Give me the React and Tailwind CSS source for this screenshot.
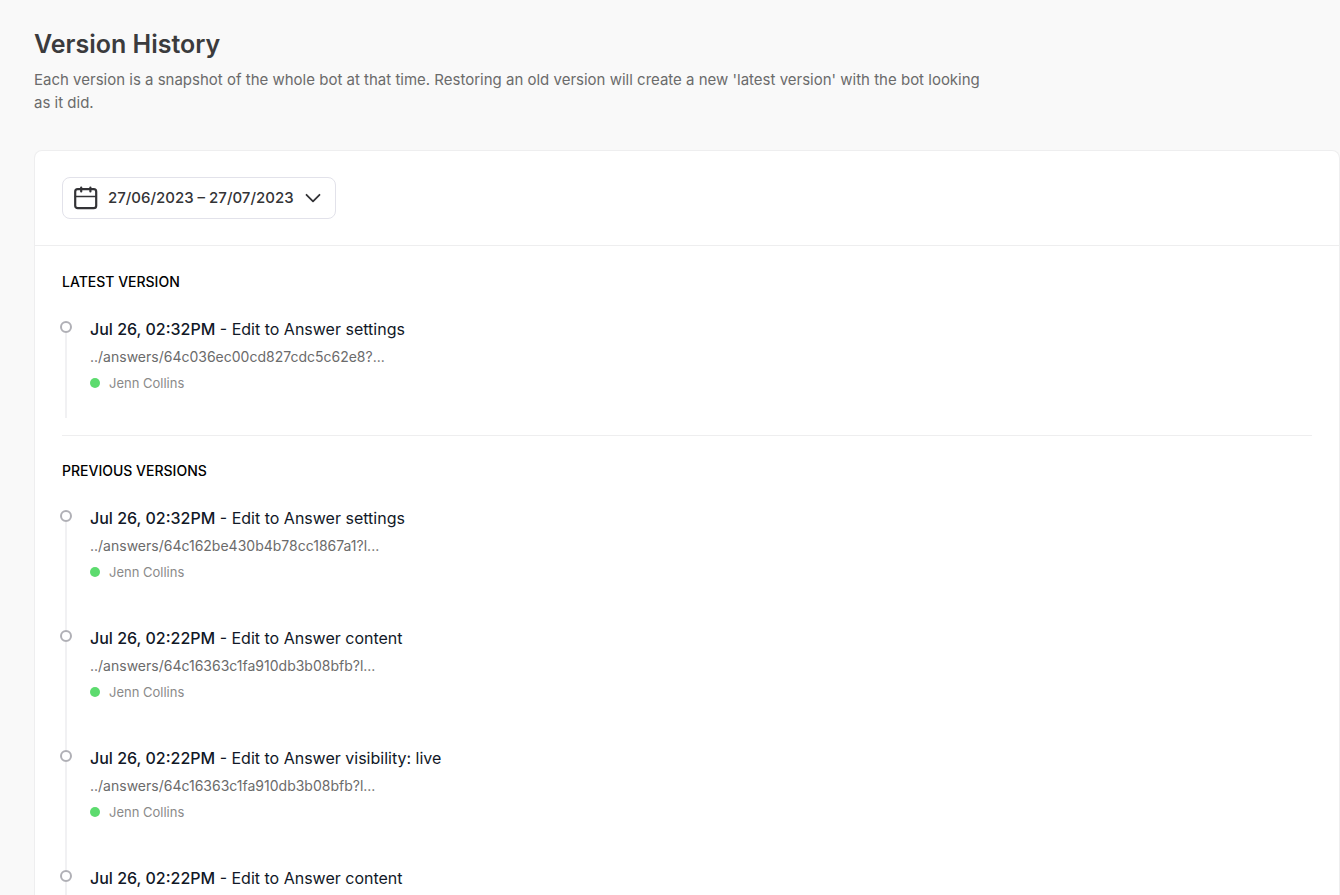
import React from 'react';

const latest = [
  { date: 'Jul 26, 02:32PM', action: 'Edit to Answer settings', path: '../answers/64c036ec00cd827cdc5c62e8?...', author: 'Jenn Collins' },
];

const previous = [
  { date: 'Jul 26, 02:32PM', action: 'Edit to Answer settings', path: '../answers/64c162be430b4b78cc1867a1?l...', author: 'Jenn Collins' },
  { date: 'Jul 26, 02:22PM', action: 'Edit to Answer content', path: '../answers/64c16363c1fa910db3b08bfb?l...', author: 'Jenn Collins' },
  { date: 'Jul 26, 02:22PM', action: 'Edit to Answer visibility: live', path: '../answers/64c16363c1fa910db3b08bfb?l...', author: 'Jenn Collins' },
  { date: 'Jul 26, 02:22PM', action: 'Edit to Answer content' },
];

function CalendarIcon() {
  return (
    <svg width="24" height="24" viewBox="0 0 24 24" fill="none" stroke="currentColor" strokeWidth="2.2" strokeLinecap="round" aria-hidden="true">
      <rect x="1.2" y="3.2" width="21" height="19" rx="2.5" />
      <path d="M1.5 10.5h20.5" strokeWidth="1.6" />
      <path d="M7.2 1.6v3.8M16.4 1.6v3.8" />
    </svg>
  );
}

function ChevronIcon() {
  return (
    <svg width="16" height="10" viewBox="0 0 16 10" fill="none" stroke="currentColor" strokeWidth="1.8" strokeLinecap="round" strokeLinejoin="round" aria-hidden="true">
      <path d="M1.5 1.8 8 8.3l6.5-6.5" />
    </svg>
  );
}

function Version({ item, single }) {
  return (
    <li className={`group flex gap-[18px] ${single ? 'h-[102px]' : 'h-[120px]'}`}>
      {/* Timeline marker */}
      <div className="flex w-3 shrink-0 flex-col items-center">
        <div className="h-[5px] w-[2px] bg-[#f1f1f3] group-first:bg-transparent" />
        <div className="h-3 w-3 shrink-0 rounded-full border-2 border-[#b0b0b6] bg-white" />
        <div className="w-[2px] flex-1 bg-[#f1f1f3]" />
      </div>
      <div className="min-w-0">
        <p className="text-base leading-[26px] text-[#111827]">
          <span className="font-medium">{item.date}</span> - {item.action}
        </p>
        {item.path && (
          <a href="#" className="mt-[5px] block text-sm leading-5 text-[#6b6b6b]">{item.path}</a>
        )}
        {item.author && (
          <div className="mt-[6px] flex items-center gap-[9px] text-[13px] leading-5 text-[#8a8a8a]">
            <span className="h-[10px] w-[10px] rounded-full bg-[#5cdb6e]" />
            {item.author}
          </div>
        )}
      </div>
    </li>
  );
}

export default function App() {
  return (
    <div className="flex h-screen flex-col overflow-hidden bg-[#f9f9f9] pl-[34px] font-['Inter',sans-serif]">
      <header className="pt-7">
        <h1 className="text-[25px] font-semibold leading-8 text-[#3b3b3d]">Version History</h1>
        <p className="mt-2 max-w-[960px] text-[15px] leading-[23px] text-[#6b6b6b]">
          Each version is a snapshot of the whole bot at that time. Restoring an old version will create a new 'latest version' with the bot looking as it did.
        </p>
      </header>

      <main className="mt-9 flex-1 rounded-t-lg border border-b-0 border-[#eeeeef] bg-white">
        <div className="border-b border-[#eeeeef] px-[27px] py-[26px]">
          <button type="button" className="flex h-[42px] items-center rounded-lg border border-[#e2e2ea] pr-[14px] pl-[11px] text-[#333336]">
            <CalendarIcon />
            <span className="mr-[11px] ml-[10px] text-[15px] font-medium">27/06/2023 – 27/07/2023</span>
            <ChevronIcon />
          </button>
        </div>

        <div className="px-[27px]">
          <section className="border-b border-[#eeeeef] pt-[26px] pb-[17px]">
            <h2 className="text-sm font-medium leading-5 text-black">LATEST VERSION</h2>
            <ul className="mt-6 -ml-[2px]">
              {latest.map((item, i) => <Version key={i} item={item} single />)}
            </ul>
          </section>

          <section className="pt-[25px]">
            <h2 className="text-sm font-medium leading-5 text-black">PREVIOUS VERSIONS</h2>
            <ul className="mt-6 -ml-[2px]">
              {previous.map((item, i) => <Version key={i} item={item} />)}
            </ul>
          </section>
        </div>
      </main>
    </div>
  );
}
